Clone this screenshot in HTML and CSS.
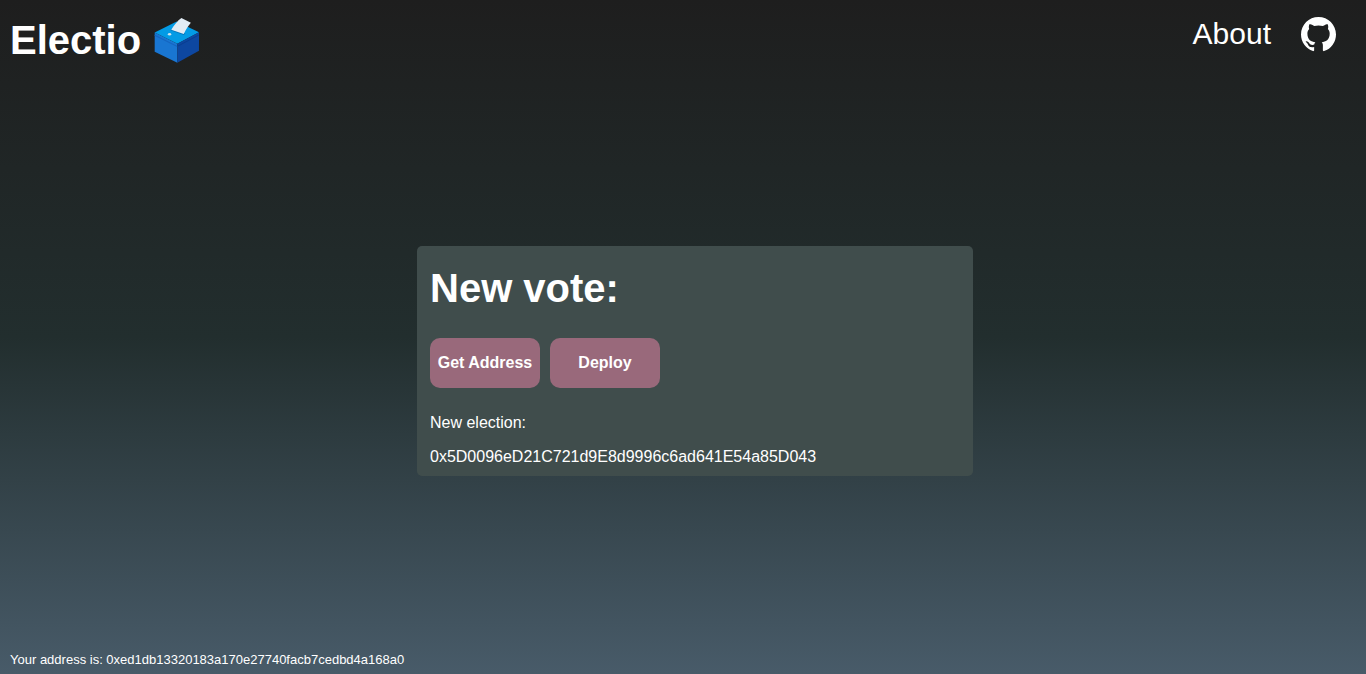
FILE: index.html
```
<!DOCTYPE html>
<html lang="en">
<head>
  <meta charset="utf-8">
  <meta name="viewport" content="width=device-width, initial-scale=1">
  <title>Electio</title>
  <link rel="stylesheet" href="styles.css">
</head>
<body>
  <header class="header">
    <h1 class="brand">Electio
      <svg class="brand-icon" viewBox="28 21 136 136" aria-hidden="true">
        <path fill="#039be5" d="M30 67 95 34 161 66 97 100z"/>
        <path fill="#1976d2" d="M30 67 97 100V156L30 124z"/>
        <path fill="#0d47a1" d="M161 66 97 100V156L161 121z"/>
        <path fill="none" stroke="#1565c0" stroke-width="3" d="M30 75 97 108"/>
        <path fill="none" stroke="#0a3d8f" stroke-width="3" d="M97 108 161 74"/>
        <path fill="#0277bd" d="M76 60 82 56 121 70 116 74z"/>
        <path fill="#e1ebf4" d="M79 59C88 45 97 32 109 24L137 38C130 46 123 57 116 71z"/>
        <ellipse cx="74" cy="72" rx="5" ry="4" fill="#cfe3ee"/>
      </svg>
    </h1>
    <nav class="nav">
      <a class="nav-link" href="#about">About</a>
      <a class="nav-link" href="#github" aria-label="GitHub">
        <svg class="github-icon" viewBox="0 0 16 16" aria-hidden="true">
          <path fill="currentColor" d="M8 0C3.58 0 0 3.58 0 8c0 3.54 2.29 6.53 5.47 7.59.4.07.55-.17.55-.38 0-.19-.01-.82-.01-1.49-2.01.37-2.53-.49-2.69-.94-.09-.23-.48-.94-.82-1.13-.28-.15-.68-.52-.01-.53.63-.01 1.08.58 1.23.82.72 1.21 1.87.87 2.33.66.07-.52.28-.87.51-1.07-1.78-.2-3.64-.89-3.64-3.95 0-.87.31-1.59.82-2.15-.08-.2-.36-1.02.08-2.12 0 0 .67-.21 2.2.82.64-.18 1.32-.27 2-.27s1.36.09 2 .27c1.53-1.04 2.2-.82 2.2-.82.44 1.1.16 1.92.08 2.12.51.56.82 1.27.82 2.15 0 3.07-1.87 3.75-3.65 3.95.29.25.54.73.54 1.48 0 1.07-.01 1.93-.01 2.2 0 .21.15.46.55.38A8.01 8.01 0 0 0 16 8c0-4.42-3.58-8-8-8z"/>
        </svg>
      </a>
    </nav>
  </header>
  <main class="main">
    <section class="card">
      <h2 class="card-title">New vote:</h2>
      <div class="actions">
        <button class="button" type="button">Get Address</button>
        <button class="button" type="button">Deploy</button>
      </div>
      <p class="result">New election:</p>
      <p class="result">0x5D0096eD21C721d9E8d9996c6ad641E54a85D043</p>
    </section>
  </main>
  <footer class="footer">Your address is: 0xed1db13320183a170e27740facb7cedbd4a168a0</footer>
</body>
</html>
```
FILE: styles.css
```
* {
  box-sizing: border-box;
}

body {
  display: flex;
  flex-direction: column;
  min-height: 100vh;
  margin: 0;
  color: #fff;
  font: 16px/18px "Liberation Sans", Arial, sans-serif;
  background: linear-gradient(#1e1e1e, #222e2e 50%, #485b69);
}

.header {
  display: flex;
  justify-content: space-between;
  align-items: flex-start;
  padding: 16px 30px 0 10px;
}

.brand {
  display: flex;
  align-items: center;
  gap: 13px;
  margin: 0;
  font-size: 40px;
  line-height: 48px;
}

.brand-icon {
  width: 46px;
  height: 46px;
}

.nav {
  display: flex;
  align-items: center;
  gap: 30px;
  font-size: 30px;
  line-height: 36px;
}

.nav-link {
  display: flex;
  color: inherit;
  text-decoration: none;
}

.github-icon {
  width: 35px;
  height: 35px;
}

.main {
  flex: 1;
  display: flex;
  align-items: center;
  justify-content: center;
  padding: 6px 0 0 24px;
}

.card {
  width: 100%;
  max-width: 556px;
  padding: 19px 13px 10px;
  border-radius: 5px;
  background: #404d4c;
}

.card-title {
  margin: 0 0 27px;
  font-size: 40px;
  line-height: 46px;
}

.actions {
  display: flex;
  flex-wrap: wrap;
  gap: 10px;
  margin-bottom: 26px;
}

.button {
  width: 110px;
  height: 50px;
  padding: 0;
  border: 0;
  border-radius: 10px;
  color: inherit;
  font: inherit;
  font-weight: bold;
  background: #99697b;
  cursor: pointer;
}

.result {
  margin: 0;
  overflow-wrap: anywhere;
}

.result + .result {
  margin-top: 16px;
}

.footer {
  padding: 0 10px 6px;
  font-size: 13px;
  line-height: 16px;
}
```
